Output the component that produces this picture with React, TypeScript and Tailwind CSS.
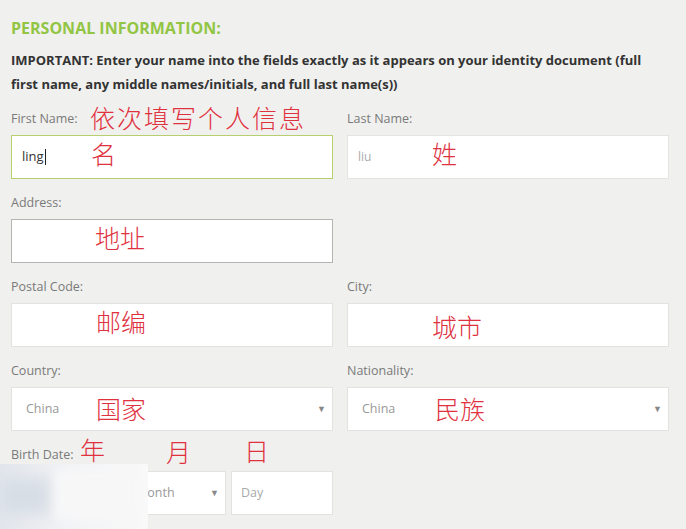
import React from 'react'

const cjk = "font-['Noto_Sans_CJK_SC',sans-serif] font-light text-[#e0313f] text-[25px] leading-none absolute pointer-events-none"

function Label({ children }: { children: React.ReactNode }) {
  return <div className="h-4 text-[12.5px] leading-4 text-[#7a7a7a] mb-2">{children}</div>
}

function Select({ value, className = '' }: { value?: string; className?: string }) {
  return (
    <div className={'h-11 bg-white border border-[#e2e2e0] flex items-center justify-between pr-[6px] text-[12.5px] text-[#999] ' + className}>
      <span>{value}</span>
      <span className="text-[9px] text-[#888]">▼</span>
    </div>
  )
}

export default function App() {
  return (
    <div className="w-[686px] h-[529px] overflow-hidden bg-[#f0f0ee] font-['Open_Sans',sans-serif] relative">
      <div className="px-[11px] pt-[17px]">
        <h2 className="text-[16px] leading-[22px] font-bold text-[#92c544]">PERSONAL INFORMATION:</h2>
        <p className="mt-[9px] text-[13px] leading-6 font-bold text-[#333] w-[648px]">
          IMPORTANT: Enter your name into the fields exactly as it appears on your identity document (full first name, any middle names/initials, and full last name(s))
        </p>

        <div className="mt-[15px] grid grid-cols-[322px_322px] gap-x-[14px] gap-y-4">
          <div className="relative">
            <Label>First Name:</Label>
            <div className="h-11 bg-white border border-[#b8cf70] flex items-center px-[10px] text-[13px] text-[#333]">
              ling<span className="w-px h-4 bg-[#222] ml-px" />
            </div>
            <span className={cjk + ' left-[79px] top-[-6px] tracking-[2px]'}>依次填写个人信息</span>
            <span className={cjk + ' left-[80px] top-[30px]'}>名</span>
          </div>
          <div className="relative">
            <Label>Last Name:</Label>
            <div className="h-11 bg-white border border-[#e4e4e2] flex items-center px-[10px] text-[12px] text-[#aaa]">liu</div>
            <span className={cjk + ' left-[85px] top-[30px]'}>姓</span>
          </div>

          <div className="relative">
            <Label>Address:</Label>
            <div className="h-11 bg-white border border-[#b4b4b2]" />
            <span className={cjk + ' left-[84px] top-[30px]'}>地址</span>
          </div>
          <div />

          <div className="relative">
            <Label>Postal Code:</Label>
            <div className="h-11 bg-white border border-[#e2e2e0]" />
            <span className={cjk + ' left-[85px] top-[30px]'}>邮编</span>
          </div>
          <div className="relative">
            <Label>City:</Label>
            <div className="h-11 bg-white border border-[#e2e2e0]" />
            <span className={cjk + ' left-[85px] top-[35px]'}>城市</span>
          </div>

          <div className="relative">
            <Label>Country:</Label>
            <Select value="China" className="pl-[14px]" />
            <span className={cjk + ' left-[85px] top-[33px]'}>国家</span>
          </div>
          <div className="relative">
            <Label>Nationality:</Label>
            <Select value="China" className="pl-[14px]" />
            <span className={cjk + ' left-[88px] top-[33px]'}>民族</span>
          </div>

          <div className="relative">
            <Label>Birth Date:</Label>
            <div className="flex gap-[5px]">
              <Select className="w-[109px] pl-[10px]" />
              <Select value="Month" className="w-[101px] pl-[10px] text-[#888]" />
              <div className="h-11 w-[102px] bg-white border border-[#e2e2e0] flex items-center px-[9px] text-[12.5px] text-[#aaa]">Day</div>
            </div>
            <span className={cjk + ' left-[69px] top-[-10px]'}>年</span>
            <span className={cjk + ' left-[155px] top-[-8px]'}>月</span>
            <span className={cjk + ' left-[233px] top-[-9px]'}>日</span>
          </div>
        </div>
      </div>

      {/* mosaic over the year field */}
      <div className="absolute left-0 top-[464px] w-[148px] h-[65px] pointer-events-none overflow-hidden">
        <div className="absolute inset-0 bg-gradient-to-r from-[#e2e6ec] via-[#f3f4f6] to-[#f9f9f9]" />
        <div className="absolute left-0 top-[14px] w-[50px] h-[36px] bg-[#d8dee6] blur-[7px]" />
        <div className="absolute left-[55px] top-[6px] w-[80px] h-[50px] bg-[#f7f7f8] blur-[5px]" />
      </div>
    </div>
  )
}
